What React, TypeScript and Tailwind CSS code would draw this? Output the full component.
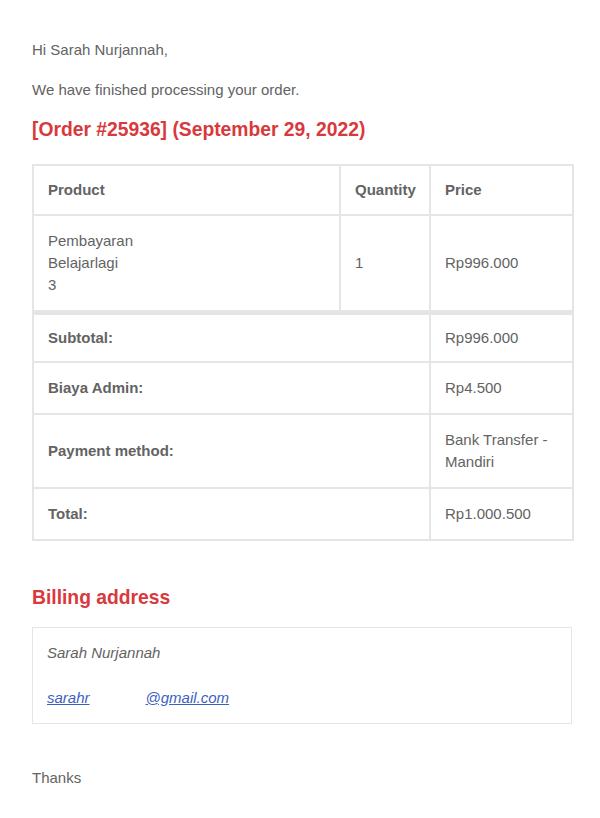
// Email pesanan selesai (template WooCommerce)
const base = 'border border-[#e5e5e5] px-[14px] align-middle text-left';
const cell = `${base} py-[14px]`;
const headCell = `${base} py-[13px] font-bold`;
const subCell = `${base} border-t-4 py-[12px]`;

export default function App() {
  return (
    <div className="min-h-screen bg-white px-[32px] pt-[39px] pb-10 font-['Liberation_Sans',Arial,sans-serif] text-[15px] leading-[22px] text-[#636363]">
      <p className="mb-[18px]">Hi Sarah Nurjannah,</p>
      <p className="mb-[17px]">We have finished processing your order.</p>

      <h2 className="mb-[22px] text-[19.3px] font-bold leading-[24px] text-[#d8393d]">
        [Order #25936] (September 29, 2022)
      </h2>

      {/* Tabel pesanan */}
      <table className="w-[540px] table-fixed border-separate border-spacing-0 border border-[#e5e5e5]">
        <colgroup>
          <col className="w-[307px]" />
          <col className="w-[90px]" />
          <col className="w-[143px]" />
        </colgroup>
        <thead>
          <tr>
            <th className={headCell}>Product</th>
            <th className={headCell}>Quantity</th>
            <th className={headCell}>Price</th>
          </tr>
        </thead>
        <tbody>
          <tr>
            <td className={cell}>
              Pembayaran
              <br />
              Belajarlagi
              <br />3
            </td>
            <td className={cell}>1</td>
            <td className={cell}>Rp996.000</td>
          </tr>
        </tbody>
        <tfoot>
          <tr>
            <th colSpan={2} className={`${subCell} font-bold`}>Subtotal:</th>
            <td className={subCell}>Rp996.000</td>
          </tr>
          <tr>
            <th colSpan={2} className={`${cell} font-bold`}>Biaya Admin:</th>
            <td className={cell}>Rp4.500</td>
          </tr>
          <tr>
            <th colSpan={2} className={`${cell} font-bold`}>Payment method:</th>
            <td className={cell}>
              Bank Transfer -
              <br />
              Mandiri
            </td>
          </tr>
          <tr>
            <th colSpan={2} className={`${cell} font-bold`}>Total:</th>
            <td className={cell}>Rp1.000.500</td>
          </tr>
        </tfoot>
      </table>

      {/* Alamat tagihan */}
      <h2 className="mt-[45px] mb-[17px] text-[19.3px] font-bold leading-[24px] text-[#d8393d]">
        Billing address
      </h2>
      <div className="w-[540px] border border-[#e5e5e5] px-[14px] py-[14px] italic">
        <p>Sarah Nurjannah</p>
        <p className="mt-[23px]">
          <a href="#" className="text-[#3d5fc0] underline">sarahr</a>
          <span className="inline-block w-[56px]" />
          <a href="#" className="text-[#3d5fc0] underline">@gmail.com</a>
        </p>
      </div>

      <p className="mt-[43px]">Thanks</p>
    </div>
  );
}
